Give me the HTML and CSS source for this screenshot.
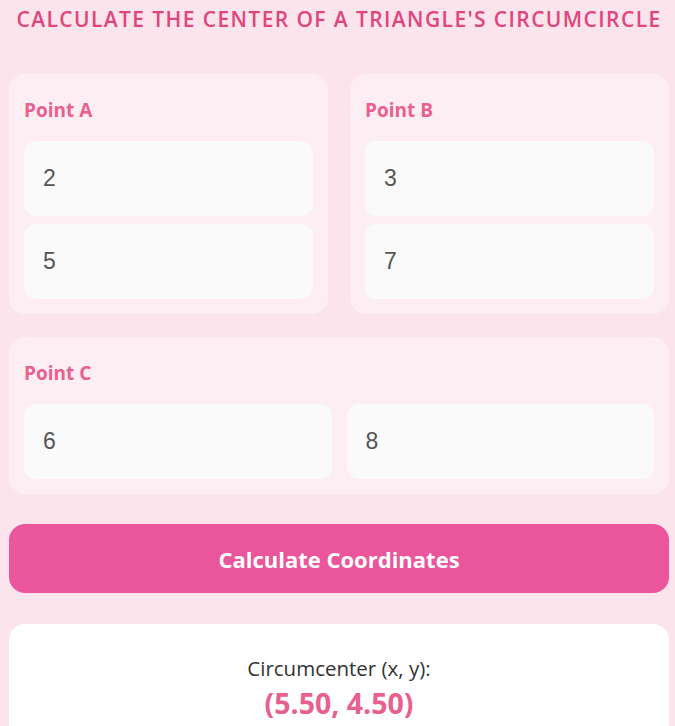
FILE: index.html
```html
<!DOCTYPE html>
<html lang="en">
<head>
  <meta charset="UTF-8">
  <meta name="viewport" content="width=device-width, initial-scale=1.0">
  <title>Circumcenter Calculator</title>
  <link rel="stylesheet" href="styles.css">
</head>
<body>
  <div class="container">
    <h1 class="title">Calculate the center of a triangle's circumcircle</h1>

    <!-- Points A and B -->
    <div class="point-row">
      <div class="point-card">
        <h2 class="point-label">Point A</h2>
        <div class="input-stack">
          <input class="coord-input" type="text" value="2">
          <input class="coord-input" type="text" value="5">
        </div>
      </div>
      <div class="point-card">
        <h2 class="point-label">Point B</h2>
        <div class="input-stack">
          <input class="coord-input" type="text" value="3">
          <input class="coord-input" type="text" value="7">
        </div>
      </div>
    </div>

    <!-- Point C -->
    <div class="point-card">
      <h2 class="point-label">Point C</h2>
      <div class="input-pair">
        <input class="coord-input" type="text" value="6">
        <input class="coord-input" type="text" value="8">
      </div>
    </div>

    <button class="calc-button">Calculate Coordinates</button>

    <!-- Result -->
    <div class="result-card">
      <p class="result-label">Circumcenter (x, y):</p>
      <p class="result-value">(5.50, 4.50)</p>
    </div>
  </div>
</body>
</html>
```

FILE: styles.css
```css
* {
  margin: 0;
  padding: 0;
  box-sizing: border-box;
  font-family: "Open Sans", "Noto Sans", sans-serif;
}

body {
  background-color: #fbe4ec;
}

.container {
  padding: 5px 6px 0 9px;
  display: flex;
  flex-direction: column;
}

.title {
  text-align: center;
  font-size: 21px;
  font-weight: 600;
  letter-spacing: 1.4px;
  text-transform: uppercase;
  color: #e0457e;
  margin-bottom: 41px;
}

.point-row {
  display: flex;
  gap: 22px;
  margin-bottom: 23px;
}

.point-row .point-card {
  flex: 1;
}

.point-card {
  background-color: #fdeef3;
  border-radius: 16px;
  padding: 24px 15px 15px;
}

.point-label {
  font-size: 19px;
  line-height: 24px;
  font-weight: 700;
  color: #e9608f;
  margin-bottom: 19px;
}

.input-stack {
  display: flex;
  flex-direction: column;
  gap: 8px;
}

.input-pair {
  display: flex;
  gap: 15px;
}

.input-pair .coord-input {
  flex: 1;
  min-width: 0;
}

.coord-input {
  height: 75px;
  width: 100%;
  border: none;
  outline: none;
  border-radius: 12px;
  background-color: #fafafa;
  padding: 0 19px;
  font-family: "Liberation Sans", Arial, sans-serif;
  font-size: 23px;
  color: #555;
}

.calc-button {
  margin-top: 30px;
  height: 69px;
  border: none;
  border-radius: 16px;
  background-color: #ea559b;
  color: #fff;
  font-size: 22px;
  font-weight: 700;
  cursor: pointer;
}

.result-card {
  margin-top: 31px;
  background-color: #fff;
  border-radius: 16px;
  padding: 30px 15px 20px;
  text-align: center;
}

.result-label {
  font-size: 20.5px;
  color: #333;
  margin-bottom: 2px;
}

.result-value {
  font-size: 28.5px;
  font-weight: 700;
  color: #e9608f;
}
```
